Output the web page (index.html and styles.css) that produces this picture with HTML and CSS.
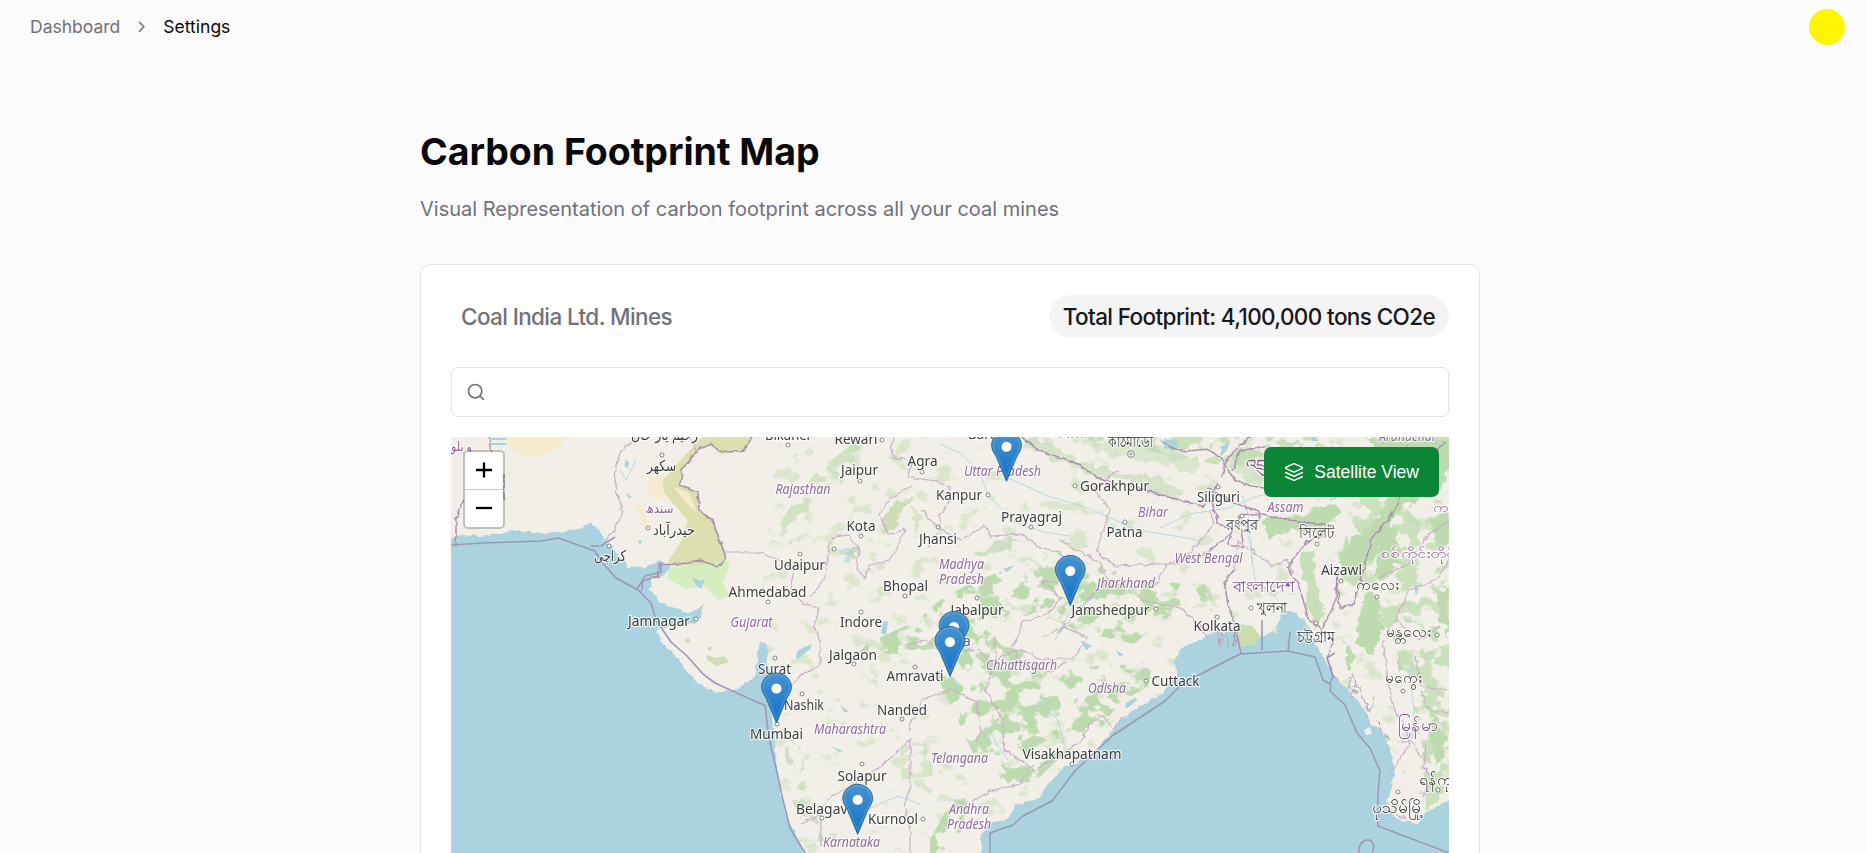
FILE: index.html
```html
<!DOCTYPE html>
<html lang="en">
<head>
<meta charset="utf-8">
<title>Carbon Footprint Map</title>
<link rel="stylesheet" href="styles.css">
</head>
<body>
<header class="topbar">
  <nav class="crumbs">
    <a class="crumb">Dashboard</a>
    <svg class="chevron" viewBox="0 0 24 24"><path d="m9 18 6-6-6-6"/></svg>
    <span class="crumb current">Settings</span>
  </nav>
  <div class="avatar"></div>
</header>
<main class="page">
  <h1 class="title">Carbon Footprint Map</h1>
  <p class="subtitle">Visual Representation of carbon footprint across all your coal mines</p>
  <section class="card">
    <div class="card-head">
      <h2 class="company">Coal India Ltd. Mines</h2>
      <span class="total">Total Footprint: 4,100,000 tons CO2e</span>
    </div>
    <div class="search">
      <svg class="search-icon" viewBox="0 0 24 24"><circle cx="11" cy="11" r="8"/><path d="m21 21-4.3-4.3"/></svg>
    </div>
    <div class="map">
      <svg class="tiles" viewBox="451 437 998 416">
        <defs>
          <filter id="rough" x="-5%" y="-5%" width="110%" height="110%">
            <feTurbulence type="fractalNoise" baseFrequency=".09" numOctaves="3" seed="4"/>
            <feDisplacementMap in="SourceGraphic" scale="14" xChannelSelector="R" yChannelSelector="G"/>
          </filter>
          <filter id="patchy" x="-5%" y="-5%" width="110%" height="110%">
            <feTurbulence type="fractalNoise" baseFrequency=".05 .06" numOctaves="4" seed="9"/>
            <feColorMatrix values="0 0 0 0 0  0 0 0 0 0  0 0 0 0 0  14 0 0 0 -7"/>
            <feComposite in="SourceGraphic" operator="in"/>
          </filter>
          <filter id="sparse" x="0" y="0" width="100%" height="100%">
            <feTurbulence type="fractalNoise" baseFrequency=".045 .06" numOctaves="4" seed="21"/>
            <feColorMatrix values="0 0 0 0 0  0 0 0 0 0  0 0 0 0 0  10 0 0 0 -6.1"/>
            <feComposite in="SourceGraphic" operator="in"/>
          </filter>
          <filter id="wobble" x="-5%" y="-5%" width="110%" height="110%">
            <feTurbulence type="fractalNoise" baseFrequency=".14" numOctaves="2" seed="2"/>
            <feDisplacementMap in="SourceGraphic" scale="5" xChannelSelector="R" yChannelSelector="G"/>
          </filter>
          <linearGradient id="pinfill" x1="0" y1="0" x2="0" y2="1">
            <stop offset="0" stop-color="#4594d0"/><stop offset="1" stop-color="#126fc6"/>
          </linearGradient>
          <g id="pin">
            <path d="M0 0 10 -24c1.700 -3.500 4.900 -6.900 4.900 -12C14.900-43.500 8.200-50 0-50S-14.900-43.500-14.900-36c0 5.100 3.200 8.500 4.900 12z" fill="url(#pinfill)" stroke="#2e6c97" stroke-width="1"/>
            <path d="M0-4.500 8.700-24.500c1.700-3.500 4.600-7 4.600-11.500C13.300-42.500 7.300-48.600 0-48.600S-13.300-42.500-13.300-36c0 4.500 2.900 8 4.600 11.500z" fill="none" stroke="#fff" stroke-opacity=".14" stroke-width="1.400"/>
            <circle cy="-34.500" r="5.300" fill="#fff" stroke="#2e6c97" stroke-opacity=".55" stroke-width=".8"/>
          </g>
        </defs>
        <g class="soft">
          <rect class="land" x="451" y="437" width="998" height="416"/>
          <rect class="speckle" filter="url(#sparse)" x="760" y="437" width="689" height="416"/>
          <g class="sand">
            <path d="M502 437H566L562 446 542 455 524 457 509 448z"/>
            <path d="M650 478l15-3 3 14-6 11-8-2-7-9zM634 501l11 9 2 15-5 1z"/>
          </g>
          <path class="scrub" d="M702 437H753L745 450 720 454 711 445 699 448 682 470 680 485 698 493 699 510 714 520 722 545 726 560 712 568 690 566 667 563 682 540 688 520 664 493 663 480 678 463z"/>
          <path class="sandline" d="M674 487l15 6 8 20-14-14z"/>
          <path class="marsh" d="M669 562l21 4 22-2 14-5 4 5-7 20 7 12-12 4-12-13-20 2-18-10z"/>
          <g class="forest" filter="url(#rough)">
            <path d="M1036 437l40 22 38 12 42 4 30 20-8 6-40-18-52-10-38-18-28-10z" opacity=".55"/>
            <path d="M1090 441l80 6 30 18-6 8-60-15-46-8z" opacity=".45"/>
            <path d="M1262 520l22-7 18 4 20-13 20 5-8 12-18 9-20 2-28 4z"/>
            <path d="M1225 460l15-15 18 6 4 16 4 24-16-8-14-10z" opacity=".45"/>
            <path d="M1366 437h83v30l-6 20-26 12-14 8-16 24-11 24-24 15-16-5 16-27 20-14 18-32 12-10 20 6 6-20-40-6z"/>
            <path d="M1382 532l14-6 4 36-10 14-15 3z"/>
            <path d="M1376 590l6 40-10 26-17-14 8-42z"/>
            <path d="M1300 556l14-6 3 30 6 36-7 14-8-24z" opacity=".8"/>
            <path d="M1433 707l8 24 5 27-8 10-8-30z"/>
            <path d="M1398 653l4 16-4 6zM1345 640l10 14-4 16-6-10z"/>
            <path d="M1438 590h11v50l-10-22zM1431 520l18-10v35l-12 6z"/>
            <path d="M973 555l24-14 24-1-18 10-22 6z" opacity=".7"/>
          </g>
          <g class="scrubpatch" filter="url(#rough)">
            <path d="M892 506l12-10 10 4-13 14-8 16-11 2 3-14zM842 551l12-3 6 4-10 5z"/>
            <path d="M914 502l7 14-2 18-6-16z" opacity=".6"/>
          </g>
          <g class="forest" filter="url(#patchy)">
            <path d="M940 600l36-20 50-16 28-6 52 8 30 15 70 3 8 20-50 14-30 26-58-14-40-18-42 16-30 22-52 10-30-8z"/>
            <path d="M956 640l34-8 12 14 42 10 14 50-20 50-30 28-32-24-18-40-20-42z"/>
            <path d="M1000 690l54-10 22 20-8 50-42 40-24-24z"/>
            <path d="M1060 670l54-6 38 4-4 18-30 18-20 30-44 18-16-30z"/>
            <path d="M1100 600l90-15 10 20-36 18-40 18-30-6z" opacity=".7"/>
            <path d="M784 735l16 12 8 40 16 54h-14l-22-50z" opacity=".7"/>
            <path d="M870 642l44-20 30-16 24 2-50 34-40 10-30 10z"/>
            <path d="M900 740l36 6-4 30-30 4z" opacity=".5"/>
            <path d="M930 840l20-38 14-8 6 20-20 39h-20z"/>
            <path d="M1020 437h429v40l-220-10-100-20z" opacity=".8"/>
            <path d="M1350 495h99v358h-20l-8-120-30-100-50-60z" opacity=".75"/>
            <path d="M770 540l24-40 24-30 40-30 20 4-46 50-30 30-14 26z" opacity=".6"/>
          </g>
          <g class="water">
            <path filter="url(#wobble)" d="M440 545l18-10 22 1 35-5 30 2 30-3 15-6 10 5 2 6 1 8 9 3 6 10 6 6 4 6 17-1 10-5 7-1 8 5-4 8-15 5-1 10 9 12 12 6 16 5 12-3 6-5-4 11-5 8-17 1-23 6 5 11 12 12 11 15 15 16 17 9 18-3 18-10 4-10 2-17 2-10h7l1 20 2 12 0 20 4 45 4 40 7 32 12 25 14 30v15H440z"/>
            <path filter="url(#wobble)" d="M981 866V836L987 823 1007 820 1015 806 1040 798 1045 788 1063 768 1073 765 1097 750 1120 720 1140 706 1163 693 1178 676 1173 660 1183 648 1207 636 1215 631 1243 633 1257 638 1275 632 1284 608 1296 614 1306 622 1318 648 1328 666 1340 682 1357 700 1373 720 1383 733 1392 753 1394 776 1385 808 1400 820 1417 823 1427 812 1449 800 1462 800V866z"/>
            <path d="M838 551l8-3 8 0 0 6-5 9-6-1 4-6z" opacity=".55"/>
          </g>
          <g class="delta" filter="url(#rough)"><path d="M1214 628l6 20M1220 626l3 22M1228 626v22M1234 628l2 18M1348 675l7 22M1360 690l10 28M1372 695l-4 20M1378 720l8 18M1352 675l8 20M1388 805l16 15M1402 810l4 10M1410 806l3 16"/></g>
          <path class="mangrove" d="M1237 636l3-12 12 2 9 11-7 8-14 2z"/>
          <path class="land" d="M1364 730l6-3 2 7-6 1zM1366 711l6 2 5 14-6-2z"/>
          <path class="scrubpatch" d="M707 655l9 3 8-2 5 6-12 4-10-6zM685 639l4-1 1 4-4 1zM708 647l4 0-1 4-3-1z"/>
          <g class="rivers">
            <path d="M940 444l22 10 18 20 8 20 26 28 30 10 26 4M1008 478l40 18 40 12 50 22 60 10M1160 528l30-14 38-6 30-12 42-8 30-12 30-18M1242 495l8 26 2 44M1055 640l16-30 30-16M1245 520l6 30 4 30 20 16 10 16M1412 650l-2 30 4 30-2 30"/>
            <path d="M1038 700l20 20 10 40M940 800l24 0 22 12M866 810l32-14 22 8M990 730l8 16 10 14M620 470l6 10 10-20"/>
          </g>
          <g class="lakes"><path d="M625 460l4 2-1 6-3-1zM625 493l7 4-3 1zM638 541l4-1-2 5zM692 577l8 4 5-2-4 10-5-4zM883 622l5-1-2 14-5-2zM840 705l8 6-3 2zM831 746l12 5-4 1zM798 650l14-6-2 5-12 10-2-2zM1126 703l8-5 4 1-8 7-5 3zM1164 439l14 2-1 9-13-2zM1222 446l8-4-3 8-7 7zM1312 437h5v4h-5zM1414 586l5 2-3 8zM1080 640l12 6-6 4zM1116 650l8 5-5 1zM1003 569l12-4-8 7zM490 438h16v2h-16zM491 443h15v2h-15z"/></g>
          <g class="border" filter="url(#wobble)">
            <path d="M753 434l-8 16-24 3-9-9-14 5-16 21-2 15 18 7 1 18 14 11 8 22 5 16-8 8-18-7-20 4-21 1-1 12-13 3-6 11" stroke-width="1.700"/>
            <path d="M1018 434l20 16 40 14 24 16 30 6 40 12 30 8 8-4" stroke-width="1.700"/>
            <path d="M1160 440l10 8 16 3 24-2 12 10 10 18 14 8 18 3M1250 437l-22 20-6 20M1268 445l-28 6-8 20" stroke-width="1.500"/>
            <path d="M1218 482l-6 20 6 22 14 6-4 14 16 4-6-32 24-2 36 8 28 2-4 12-16 6-18 26 12 20 8 30 14 12 14-30 1-28 2 36 14-4 8-24 10-40 20-24 16-34 38-40" stroke-width="1.500"/>
            <path d="M1209 550l22-16M1234 570l-10 12 4 22 7 22-2 20M1208 488l24 14 28 10-4 16M1334 640l-7 18 8 20" stroke-width="1.500"/>
            <path d="M489 437l2 18 8 6 5 14v25M464 500l-8 18 0 28" stroke-width="1.400"/>
          </g>
          <g class="state" filter="url(#wobble)">
            <path d="M637 437l-16 14-5 14-1 22 8 24-8 18-13 15M690 437l8 16"/>
            <path d="M726 552l32 0 20 8 16 10-4 20 14 14 14 4-4 18 6 16 0 22-22 14-8 10-12 4-8-4"/>
            <path d="M893 437l-2 18 22 8-5 14 28 4 14 6 0 14-10 14 0 14-14 20M913 485l-24 14-10 16 10 20 16-6-6 14-10 18-20 4-4 14-8-10 2-20-10-14-15 2-5 10-4 30-14 20M921 510l20 20 20 10 24-14 6 10 30-2 20 14 20 4 10 20-14 10-16-2 20 18-14 16-24 8-10 24 8 20 30 6 14-10"/>
            <path d="M1043 637l20-10 24 10-14 22-34 0-20-10-30 14-10-14-24 4-30-12-20 4M995 636l0 28-10 26 18 30 2 30 30 20 30-18 16-10 10-20 12-6 10 14 10-14M908 730l14-30 30-10 24 12 6 30-8 10M818 815l12-18 30-16 30-22 20-20 0 50-6 16 6 24 0 30M970 802l20-10 30-8 14-20M801 823l20-8 0 30"/>
            <path d="M1118 470l-24 20 16 20-8 24-6 18 20 14 40-2 22 0 20-20 16-20-4-14M1060 540l20 12 20 10 8 18-20 20-14 14-16 20M1154 587l14-24 28-4 16-10M1140 600l40 8 20 18 8 12M1234 572l4-30 14 8 20 16 14-6 8 14M1330 500l20-10 28-24 16 0 14-20"/>
            <path d="M1449 560l-12 20-28 10-14 30 24 20 20-14M1415 656l6 30 28 4M1421 690l8 20 20 2M1383 640l8 60 20 42-20 30M1425 745l-2 22 10 10-10 20M1402 742l10 0 12 20M1449 520l-20 14-20 30-30 14"/>
          </g>
          <g class="sea-line">
            <path d="M451 545l32-2 58-2 17-3 37 13 6 10 15 17 22 12 13 13 5 17 15 22 16 14 16 18 12 9 44 20 6 2 4 33 8 34 5 24 8 32 12 20 10 15"/>
            <path d="M637 589l8-13 16-4 0-10M591 546h10l14-9"/>
            <path d="M990 853V833L1013 825 1023 816 1052 801 1075 771 1112 736 1165 701 1183 683 1240 654 1288 651 1315 657 1323 680 1330 684 1333 676 1327 658 1335 653M1331 685L1330 691 1345 705 1357 733 1370 748 1380 771 1378 793 1378 826 1449 853M1359 853c-1-9 4-13 9-13 6 0 7 8 4 13M1237 635l4 18M1262 620v30M1290 632l-2 19"/>
          </g>
          <g class="town">
            <g class="dots">
              <circle cx="662" cy="455" r="2"/><circle cx="648" cy="528" r="2"/><circle cx="609" cy="546" r="2"/><circle cx="696" cy="619" r="2"/><circle cx="768" cy="602" r="2"/><circle cx="788" cy="445" r="2"/><circle cx="882" cy="440" r="2"/><circle cx="860" cy="481" r="2"/><circle cx="922" cy="472" r="2"/><circle cx="988" cy="495" r="2"/><circle cx="1031" cy="527" r="2"/><circle cx="861" cy="536" r="2"/><circle cx="938" cy="527" r="2"/><circle cx="800" cy="554" r="2"/><circle cx="834" cy="549" r="2"/><circle cx="905" cy="596" r="2"/><circle cx="861" cy="612" r="2"/><circle cx="977" cy="598" r="2"/><circle cx="1075" cy="486" r="2"/><circle cx="1125" cy="522" r="2"/><circle cx="1218" cy="487" r="2"/><circle cx="1242" cy="516" r="2"/><circle cx="1317" cy="544" r="2"/><circle cx="1341" cy="581" r="2"/><circle cx="1156" cy="609" r="2"/><circle cx="1217" cy="617" r="2"/><circle cx="1251" cy="608" r="2"/><circle cx="1316" cy="623" r="2"/><circle cx="1377" cy="597" r="2"/><circle cx="1437" cy="635" r="2"/><circle cx="775" cy="658" r="2"/><circle cx="854" cy="664" r="2"/><circle cx="915" cy="667" r="2"/><circle cx="802" cy="694" r="2"/><circle cx="902" cy="719" r="2"/><circle cx="777" cy="724" r="2"/><circle cx="862" cy="764" r="2"/><circle cx="822" cy="818" r="2"/><circle cx="923" cy="819" r="2"/><circle cx="1072" cy="764" r="2"/><circle cx="1146" cy="681" r="2"/><circle cx="1403" cy="691" r="2"/><circle cx="1398" cy="792" r="2"/><circle cx="1438" cy="790" r="2"/><circle cx="1131" cy="454" r="3.300"/><circle cx="1131" cy="454" r="1"/>
            </g>
            <text x="765" y="439.500" textLength="47" lengthAdjust="spacingAndGlyphs">Bikaner</text>
            <text x="834.500" y="444" textLength="43" lengthAdjust="spacingAndGlyphs">Rewari</text>
            <text x="841" y="475" textLength="37" lengthAdjust="spacingAndGlyphs">Jaipur</text>
            <text x="907.500" y="466" textLength="30" lengthAdjust="spacingAndGlyphs">Agra</text>
            <text x="968" y="439" textLength="46" lengthAdjust="spacingAndGlyphs">Bareilly</text>
            <text x="936" y="499.500" textLength="46" lengthAdjust="spacingAndGlyphs">Kanpur</text>
            <text x="1001" y="521.500" textLength="61" lengthAdjust="spacingAndGlyphs">Prayagraj</text>
            <text x="846.500" y="530.500" textLength="29" lengthAdjust="spacingAndGlyphs">Kota</text>
            <text x="919" y="543.500" textLength="38" lengthAdjust="spacingAndGlyphs">Jhansi</text>
            <text x="774" y="569.500" textLength="51" lengthAdjust="spacingAndGlyphs">Udaipur</text>
            <text x="883" y="590.500" textLength="45" lengthAdjust="spacingAndGlyphs">Bhopal</text>
            <text x="728.500" y="597" textLength="78" lengthAdjust="spacingAndGlyphs">Ahmedabad</text>
            <text x="840" y="627" textLength="42" lengthAdjust="spacingAndGlyphs">Indore</text>
            <text x="950.500" y="615" textLength="53" lengthAdjust="spacingAndGlyphs">Jabalpur</text>
            <text x="628" y="625.500" textLength="62" lengthAdjust="spacingAndGlyphs">Jamnagar</text>
            <text x="1080" y="490.500" textLength="69" lengthAdjust="spacingAndGlyphs">Gorakhpur</text>
            <text x="1197" y="502" textLength="43" lengthAdjust="spacingAndGlyphs">Siliguri</text>
            <text x="1106.500" y="536.500" textLength="36" lengthAdjust="spacingAndGlyphs">Patna</text>
            <text x="1321" y="575" textLength="41" lengthAdjust="spacingAndGlyphs">Aizawl</text>
            <text x="1071.500" y="615" textLength="78" lengthAdjust="spacingAndGlyphs">Jamshedpur</text>
            <text x="1193.500" y="631" textLength="47" lengthAdjust="spacingAndGlyphs">Kolkata</text>
            <text x="758" y="673.500" textLength="33" lengthAdjust="spacingAndGlyphs">Surat</text>
            <text x="829" y="659.500" textLength="48" lengthAdjust="spacingAndGlyphs">Jalgaon</text>
            <text x="886.500" y="681" textLength="57" lengthAdjust="spacingAndGlyphs">Amravati</text>
            <text x="784" y="709.500" textLength="40" lengthAdjust="spacingAndGlyphs">Nashik</text>
            <text x="877" y="715" textLength="50" lengthAdjust="spacingAndGlyphs">Nanded</text>
            <text x="750" y="739" textLength="53" lengthAdjust="spacingAndGlyphs">Mumbai</text>
            <text x="837.500" y="780.500" textLength="49" lengthAdjust="spacingAndGlyphs">Solapur</text>
            <text x="796" y="813.500" textLength="55" lengthAdjust="spacingAndGlyphs">Belagavi</text>
            <text x="868" y="824" textLength="50" lengthAdjust="spacingAndGlyphs">Kurnool</text>
            <text x="1022.500" y="759" textLength="99" lengthAdjust="spacingAndGlyphs">Visakhapatnam</text>
            <text x="1151.500" y="686" textLength="48" lengthAdjust="spacingAndGlyphs">Cuttack</text>
            <text x="1108" y="447" textLength="45" lengthAdjust="spacingAndGlyphs">কাঠমাডৌঁ</text>
            <text x="1226" y="530" textLength="32" lengthAdjust="spacingAndGlyphs">রংপুর</text>
            <text x="1299" y="538" textLength="35" lengthAdjust="spacingAndGlyphs">সিলেট</text>
            <text x="1257" y="612.500" textLength="30" lengthAdjust="spacingAndGlyphs">খুলনা</text>
            <text x="1296.500" y="642" textLength="38" lengthAdjust="spacingAndGlyphs">চট্টগ্রাম</text>
            <text x="1356" y="590" textLength="43" lengthAdjust="spacingAndGlyphs">ကလေး</text>
            <text x="1385.500" y="637" textLength="45" lengthAdjust="spacingAndGlyphs">မန္တလေး</text>
            <text x="1385" y="683" textLength="37" lengthAdjust="spacingAndGlyphs">မကွေး</text>
            <text x="1419" y="785" textLength="42" lengthAdjust="spacingAndGlyphs">ရန်ကုန်</text>
            <text x="1372" y="813" textLength="51" lengthAdjust="spacingAndGlyphs">ပုသိမ်မြို့</text>
            <text x="647" y="471" textLength="29" lengthAdjust="spacingAndGlyphs">سکھر</text>
            <text x="653" y="535" textLength="42" lengthAdjust="spacingAndGlyphs">حیدرآباد</text>
            <text x="594" y="561" textLength="32" lengthAdjust="spacingAndGlyphs">کراچی</text>
            <text x="631" y="440" textLength="67" lengthAdjust="spacingAndGlyphs">رحیم یار خان</text>
          </g>
          <g class="region">
            <text x="775.500" y="493.500" textLength="55" lengthAdjust="spacingAndGlyphs">Rajasthan</text>
            <text x="964" y="476" textLength="77" lengthAdjust="spacingAndGlyphs">Uttar Pradesh</text>
            <text x="939" y="569" textLength="45" lengthAdjust="spacingAndGlyphs">Madhya</text>
            <text x="939" y="584" textLength="45" lengthAdjust="spacingAndGlyphs">Pradesh</text>
            <text x="730.500" y="627" textLength="42" lengthAdjust="spacingAndGlyphs">Gujarat</text>
            <text x="1138" y="516.500" textLength="30" lengthAdjust="spacingAndGlyphs">Bihar</text>
            <text x="1267.500" y="512" textLength="36" lengthAdjust="spacingAndGlyphs">Assam</text>
            <text x="1174.500" y="563" textLength="68" lengthAdjust="spacingAndGlyphs">West Bengal</text>
            <text x="1097" y="588" textLength="58" lengthAdjust="spacingAndGlyphs">Jharkhand</text>
            <text x="1379" y="441" textLength="56" lengthAdjust="spacingAndGlyphs">Arunachal</text>
            <text x="1054" y="438" textLength="30" lengthAdjust="spacingAndGlyphs">नेपाल</text>
            <text x="986" y="670" textLength="71" lengthAdjust="spacingAndGlyphs">Chhattisgarh</text>
            <text x="814" y="734" textLength="72" lengthAdjust="spacingAndGlyphs">Maharashtra</text>
            <text x="931" y="763" textLength="57" lengthAdjust="spacingAndGlyphs">Telangana</text>
            <text x="949" y="814" textLength="40" lengthAdjust="spacingAndGlyphs">Andhra</text>
            <text x="947" y="829" textLength="44" lengthAdjust="spacingAndGlyphs">Pradesh</text>
            <text x="823" y="847" textLength="57" lengthAdjust="spacingAndGlyphs">Karnataka</text>
            <text x="1088" y="693" textLength="38" lengthAdjust="spacingAndGlyphs">Odisha</text>
          </g>
          <g class="region upright">
            <text x="645.500" y="513" textLength="28" lengthAdjust="spacingAndGlyphs">سندھ</text>
            <text x="451" y="451" textLength="21" lengthAdjust="spacingAndGlyphs">و بلو</text>
            <text x="1380" y="558" textLength="80" lengthAdjust="spacingAndGlyphs">စစ်ကိုင်းတိုင်း</text>
            <text x="1433" y="512" textLength="34" lengthAdjust="spacingAndGlyphs">ကချင်</text>
            <text class="nation" x="1246" y="470" textLength="34" lengthAdjust="spacingAndGlyphs">འབྲུག</text>
            <text class="nation" x="1232.500" y="592" textLength="62" lengthAdjust="spacingAndGlyphs">বাংলাদেশ</text>
            <text class="nation" x="934" y="645.500" textLength="37" lengthAdjust="spacingAndGlyphs">India</text>
            <text class="nation tall" x="1398" y="731" textLength="40" lengthAdjust="spacingAndGlyphs">မြန်မာ</text>
          </g>
        </g>
        <use href="#pin" x="1006.500" y="481.300"/>
        <use href="#pin" x="1070.300" y="605.500"/>
        <use href="#pin" x="954" y="661.500"/>
        <use href="#pin" x="950" y="676.500"/>
        <use href="#pin" x="776.500" y="723"/>
        <use href="#pin" x="857.700" y="834.300"/>
      </svg>
      <div class="zoom">
        <button class="zoom-btn"><svg viewBox="0 0 16 16"><path d="M0 8h16M8 0.500v15"/></svg></button>
        <button class="zoom-btn"><svg viewBox="0 0 16 16"><path d="M0 8h16"/></svg></button>
      </div>
      <button class="layer-btn">
        <svg class="layers" viewBox="0 0 24 24"><path d="m12.830 2.180a2 2 0 0 0-1.660 0L2.600 6.080a1 1 0 0 0 0 1.830l8.580 3.910a2 2 0 0 0 1.660 0l8.580-3.900a1 1 0 0 0 0-1.830Z"/><path d="m22 12.650-9.170 4.160a2 2 0 0 1-1.660 0L2 12.650"/><path d="m22 17.650-9.170 4.160a2 2 0 0 1-1.660 0L2 17.650"/></svg>
        <span>Satellite View</span>
      </button>
    </div>
  </section>
</main>
</body>
</html>
```
FILE: styles.css
```css
* { box-sizing: border-box; margin: 0; }
body {
  height: 853px;
  overflow: hidden;
  background: #fbfbfb;
  font-family: Inter, "Liberation Sans", sans-serif;
  color: #09090b;
}
.topbar {
  display: flex;
  justify-content: space-between;
  align-items: center;
  height: 53px;
  padding: 0 22.500px 0 30px;
}
.crumbs { display: flex; align-items: center; gap: 12.800px; font-size: 17.500px; line-height: 25px; color: #71717a; }
.crumb { white-space: nowrap; }
.current { color: #09090b; }
.chevron { width: 17.500px; height: 17.500px; fill: none; stroke: #71717a; stroke-width: 2; stroke-linecap: round; stroke-linejoin: round; }
.avatar { width: 36px; height: 36px; border-radius: 50%; background: #fff500; }
.page { width: 1060px; margin: 0 0 0 420px; padding-top: 74px; }
.title { font-size: 37.500px; line-height: 50px; font-weight: 700; letter-spacing: -0.050px; white-space: nowrap; }
.subtitle { margin-top: 17px; font-size: 20px; line-height: 30px; color: #71717a; white-space: nowrap; }
.card {
  margin-top: 40px;
  height: 589px;
  padding: 30px 30px 0;
  border: 1px solid #e4e4e7;
  border-bottom: 0;
  border-radius: 10px 10px 0 0;
  background: #fff;
}
.card-head { display: flex; justify-content: space-between; align-items: center; height: 42px; padding-left: 10px; }
.company { padding-top: 2px; font-size: 22.500px; line-height: 30px; font-weight: 500; letter-spacing: -0.620px; color: #71717a; }
.total {
  height: 42px;
  padding: 1px 14px 0;
  border-radius: 21px;
  background: #f4f4f5;
  font-size: 22.500px;
  line-height: 42px;
  font-weight: 500;
  letter-spacing: -0.620px;
  color: #18181b;
  white-space: nowrap;
}
.search { display: flex; align-items: center; height: 50px; margin-top: 30px; padding-left: 14px; border: 1px solid #e4e4e7; border-radius: 7px; }
.search-icon { width: 20px; height: 20px; fill: none; stroke: #71717a; stroke-width: 2; stroke-linecap: round; stroke-linejoin: round; }
.map { position: relative; width: 998px; height: 416px; margin-top: 20px; overflow: hidden; }
.tiles { display: block; width: 998px; height: 416px; }
.soft { filter: blur(0.350px); }
.land { fill: #f2efe9; }
.speckle { fill: #d3e3c3; opacity: .7; }
.sand, .sandline { fill: #f6ebcf; }
.scrub { fill: #dcdfae; }
.scrubpatch { fill: #cfdcb6; }
.marsh { fill: #d7eec0; }
.forest { fill: #bddbae; }
.water, .lakes { fill: #aad3df; }
.mangrove { fill: #cbdcae; }
.delta { fill: none; stroke: #b3a3b5; stroke-width: 1.200; }
.rivers { fill: none; stroke: #b8d9e6; stroke-width: 1; }
.border { fill: none; stroke: #ad8fae; stroke-linejoin: round; }
.state { fill: none; stroke: #c9aec9; stroke-width: 1.200; stroke-linejoin: round; }
.sea-line { fill: none; stroke: #9a98b8; stroke-width: 1.600; stroke-linejoin: round; }
.dots { fill: #fff; stroke: #777; stroke-width: .9; }
.town, .region { font-family: "Noto Sans", "DejaVu Sans", sans-serif; }
.town text, .region text { font-size: 14.800px; paint-order: stroke; stroke: #fff; stroke-opacity: .75; stroke-width: 2.400px; stroke-linejoin: round; }
.town text { fill: #3c3c3c; }
.region text { font-size: 13.600px; font-style: italic; fill: #916a9a; }
.region.upright text { font-style: normal; font-size: 13.600px; }
.region.upright .nation { font-size: 15px; fill: #835488; }
.region.upright .tall { font-size: 17px; }
.zoom {
  position: absolute;
  left: 12px;
  top: 13px;
  width: 42px;
  border: 2.500px solid rgba(0, 0, 0, .2);
  border-radius: 5px;
  background: #fff;
  background-clip: padding-box;
}
.zoom-btn { display: flex; align-items: center; justify-content: center; width: 100%; height: 37.500px; padding: 0; border: 0; background: none; }
.zoom-btn:first-child { border-bottom: 1px solid #ccc; }
.zoom-btn svg { width: 16px; height: 16px; fill: none; stroke: #000; stroke-width: 2.300; }
.layer-btn {
  position: absolute;
  top: 10px;
  right: 10px;
  display: flex;
  align-items: center;
  gap: 10px;
  height: 50px;
  padding: 0 20px;
  border: 0;
  border-radius: 7px;
  background: #0c8537;
  color: #fff;
  font: 17.500px "Liberation Sans", Arial, sans-serif;
  white-space: nowrap;
}
.layers { width: 20px; height: 20px; fill: none; stroke: #fff; stroke-width: 1.800; stroke-linecap: round; stroke-linejoin: round; }
```
